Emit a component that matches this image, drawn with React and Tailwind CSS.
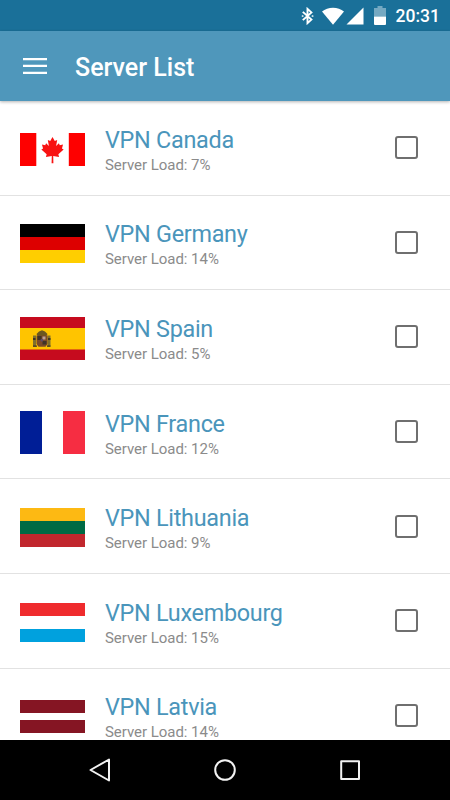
import React from 'react';

const servers = [
  { name: 'VPN Canada', load: 7, Flag: FlagCanada },
  { name: 'VPN Germany', load: 14, Flag: FlagGermany },
  { name: 'VPN Spain', load: 5, Flag: FlagSpain },
  { name: 'VPN France', load: 12, Flag: FlagFrance },
  { name: 'VPN Lithuania', load: 9, Flag: FlagLithuania },
  { name: 'VPN Luxembourg', load: 15, Flag: FlagLuxembourg },
  { name: 'VPN Latvia', load: 14, Flag: FlagLatvia },
];

function FlagCanada() {
  return (
    <svg width="65" height="33" viewBox="0 0 65 33">
      <path fill="#fe0000" d="M0 0h16.3v33H0zM48.8 0H65v33H48.8z" />
      <path
        fill="#f81212"
        transform="translate(3.25 .6) scale(.9 .97)"
        d="M32.5 3.5l-2.5 4.200-2.700-1.200 1.200 6.200-3.100-2.700-1 2-3.600-.7 1.200 4-1.900 1 5.900 4.900-.8 2.800 6.500-.9-.2 7.400h2l-.2-7.400 6.500.9-.8-2.800 5.900-4.900-1.900-1 1.200-4-3.600.7-1-2-3.100 2.700 1.200-6.200-2.700 1.200z"
      />
    </svg>
  );
}

function FlagGermany() {
  return (
    <div className="flex flex-col h-[39px]">
      <div className="flex-1 bg-black" />
      <div className="flex-1 bg-[#dd0000]" />
      <div className="flex-1 bg-[#ffce00]" />
    </div>
  );
}

function FlagSpain() {
  return (
    <svg width="65" height="43" viewBox="0 0 65 43">
      <path fill="#c60b1e" d="M0 0h65v43H0z" />
      <path fill="#ffc400" d="M0 11h65v21.5H0z" />
      {/* Coat of arms */}
      <path fill="#80702c" d="M13 18.5h3v11h-3zM27.5 18.5h3v11h-3z" />
      <path fill="#6b5720" d="M16.5 17l2.5-2.5 3-1.2 3 1.2 2.5 2.5-1 2h-9z" />
      <path fill="#7b4a28" d="M16.5 18.5h11v8.5l-2 2.8h-7l-2-2.8z" />
      <path fill="#3f3326" d="M17.5 19h4v4h-4zM22.5 24h4v3.5h-4zM13 21h2.5v2H13zM28 21h2.5v2H28zM13 28.5h4v1.3h-4zM27 28.5h3.5v1.3H27z" />
      <path fill="#b9a196" d="M22.5 19.5h3v3h-3z" />
      <path fill="#5b4a70" d="M20.7 22h2.2v2.4h-2.2z" />
    </svg>
  );
}

function FlagFrance() {
  return (
    <div className="flex h-[43px]">
      <div className="flex-1 bg-[#001e96]" />
      <div className="flex-1 bg-white" />
      <div className="flex-1 bg-[#f62d42]" />
    </div>
  );
}

function FlagLithuania() {
  return (
    <div className="flex flex-col h-[39px]">
      <div className="flex-1 bg-[#fdb913]" />
      <div className="flex-1 bg-[#006a44]" />
      <div className="flex-1 bg-[#c1272d]" />
    </div>
  );
}

function FlagLuxembourg() {
  return (
    <div className="flex flex-col h-[39px]">
      <div className="flex-1 bg-[#ef2b2d]" />
      <div className="flex-1 bg-white" />
      <div className="flex-1 bg-[#00a1de]" />
    </div>
  );
}

function FlagLatvia() {
  return (
    <div className="flex flex-col justify-between h-[33px]">
      <div className="h-[13px] bg-[#851523]" />
      <div className="h-[13px] bg-[#851523]" />
    </div>
  );
}

function StatusBar() {
  return (
    <div className="h-[31px] shrink-0 bg-[#1a7099] flex items-center justify-end pr-[10px] text-white">
      <svg width="14" height="18" viewBox="0 0 14 20" preserveAspectRatio="none" fill="none" stroke="currentColor" strokeWidth="1.9" className="mr-[7px]">
        <path d="M1.8 5.500l8.700 8.500-4 4V2l4 4-8.700 8.500" />
        <path d="M1.600 10h.1M11.500 10h.1" strokeLinecap="round" />
      </svg>
      <svg width="22" height="18" viewBox="0 0 22 18" fill="currentColor" className="mr-[2px]">
        <path d="M0 4.600C3 2.200 6.800.7 11 .7s8 1.500 11 3.900L11 17.700z" />
      </svg>
      <svg width="18" height="18" viewBox="0 0 18 18" fill="currentColor" className="mr-[10px]">
        <path d="M17.500.5v17H.5z" />
      </svg>
      <svg width="12" height="19" viewBox="0 0 12 19" fill="currentColor" className="mr-[10px]">
        <path fillOpacity=".4" d="M0 2h3.500V0h5v2H12v8.500H0z" />
        <path d="M0 10.500h12V18a1 1 0 0 1-1 1H1a1 1 0 0 1-1-1z" />
      </svg>
      <span className="text-[17.5px] leading-none font-medium pt-[3px]">20:31</span>
    </div>
  );
}

function ServerRow({ name, load, Flag }) {
  return (
    <div className="h-[94.6px] shrink-0 flex items-center pl-5 pr-8 border-b border-[#e2e2e2]">
      <div className="w-[65px] shrink-0 mt-[2.5px]">
        <Flag />
      </div>
      <div className="ml-5 flex-1 pt-[6px]">
        <div className="text-[23.4px] leading-[28px] tracking-[-0.28px] text-[#4a95bb]">{name}</div>
        <div className="text-[15px] leading-[22px] tracking-[-0.04px] text-[#8b8b8b]">Server Load: {load}%</div>
      </div>
      <div className="w-[23px] h-[23px] shrink-0 border-2 border-[#6f6f6f] rounded-[3px]" />
    </div>
  );
}

export default function App() {
  return (
    <div className="w-[450px] h-[800px] flex flex-col overflow-hidden bg-white font-['Roboto',sans-serif]">
      <StatusBar />

      {/* Toolbar */}
      <div className="h-[70px] shrink-0 bg-[#4f97bb] flex items-center pl-[23px] shadow-[0_1px_3px_rgba(0,0,0,0.3)] z-10">
        <svg width="24" height="18" viewBox="0 0 24 18" fill="white">
          <path d="M0 1h24v2.300H0zM0 7.800h24v2.300H0zM0 14.700h24V17H0z" />
        </svg>
        <h1 className="ml-7 text-[25px] leading-none font-medium text-white pt-[2px]">Server List</h1>
      </div>

      {/* Server list */}
      <div className="flex-1 min-h-0 overflow-hidden flex flex-col">
        {servers.map(s => (
          <ServerRow key={s.name} {...s} />
        ))}
      </div>

      {/* Navigation bar */}
      <div className="h-[60px] shrink-0 bg-black flex items-center justify-center gap-[101px] text-[#f2f2f2]">
        <svg width="24" height="24" viewBox="0 0 24 24" fill="none" stroke="currentColor" strokeWidth="2" strokeLinejoin="round">
          <path d="M21 1.500v21L2.500 12z" />
        </svg>
        <svg width="24" height="24" viewBox="0 0 24 24" fill="none" stroke="currentColor" strokeWidth="2">
          <circle cx="12" cy="12" r="9.800" />
        </svg>
        <svg width="24" height="24" viewBox="0 0 24 24" fill="none" stroke="currentColor" strokeWidth="2" strokeLinejoin="round">
          <path d="M3.200 3.200h17.800v17.800H3.200z" />
        </svg>
      </div>
    </div>
  );
}
